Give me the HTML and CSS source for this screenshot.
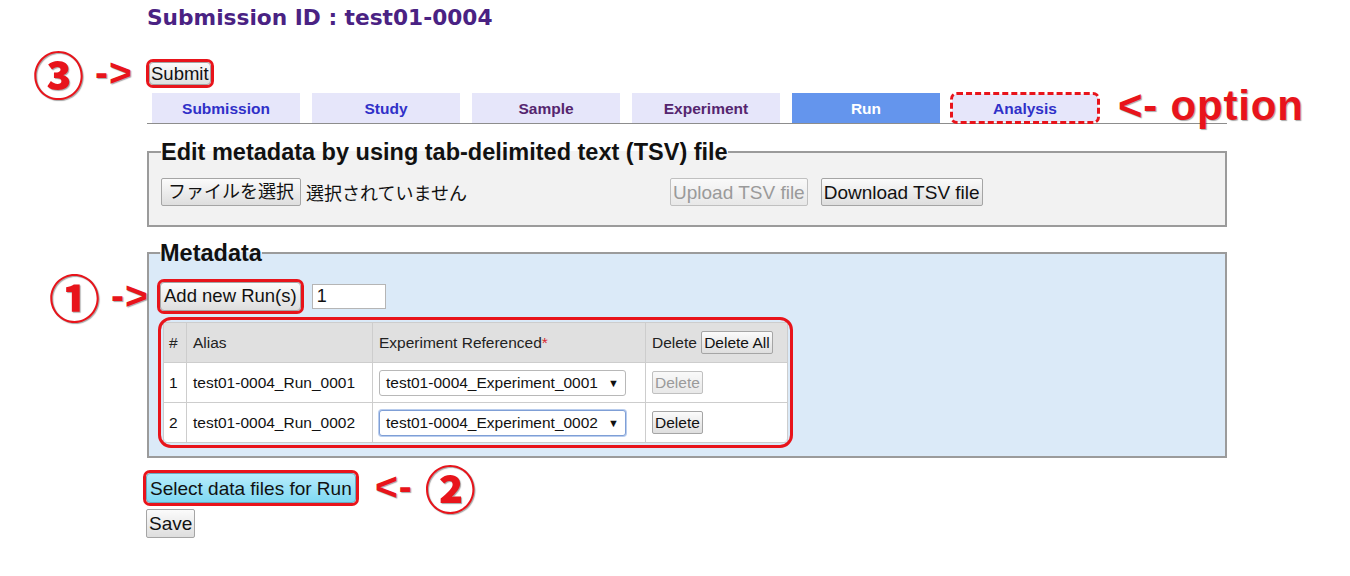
FILE: index.html
```html
<!DOCTYPE html>
<html lang="ja">
<head>
<meta charset="utf-8">
<title>Run</title>
<link rel="stylesheet" href="styles.css">
</head>
<body>
<div class="page">
  <h1 class="title">Submission ID : test01-0004</h1>

  <div class="submit-row">
    <span class="note note-3"><span class="circ">③</span><span class="arrow">-&gt;</span></span>
    <button class="btn btn-submit marked">Submit</button>
  </div>

  <div class="tabs">
    <a class="tab link">Submission</a>
    <a class="tab link">Study</a>
    <a class="tab visited">Sample</a>
    <a class="tab visited">Experiment</a>
    <a class="tab active">Run</a>
    <a class="tab link dashed">Analysis</a>
    <span class="note note-option">&lt;- option</span>
  </div>

  <fieldset class="fs fs-tsv">
    <legend>Edit metadata by using tab-delimited text (TSV) file</legend>
    <div class="tsv-row">
      <span class="file-input"><button class="btn btn-file">ファイルを選択</button><span class="file-name">選択されていません</span></span>
      <button class="btn" disabled>Upload TSV file</button>
      <button class="btn">Download TSV file</button>
    </div>
  </fieldset>

  <fieldset class="fs fs-meta">
    <legend>Metadata</legend>
    <div class="add-row">
      <span class="note note-1"><span class="circ">①</span><span class="arrow">-&gt;</span></span>
      <button class="btn btn-add marked">Add new Run(s)</button>
      <input class="num" type="text" value="1">
    </div>
    <table class="runs marked-box">
      <thead>
        <tr>
          <th class="c-no">#</th>
          <th class="c-alias">Alias</th>
          <th class="c-exp">Experiment Referenced<span class="req">*</span></th>
          <th class="c-del">Delete <button class="btn btn-sm">Delete All</button></th>
        </tr>
      </thead>
      <tbody>
        <tr>
          <td class="c-no">1</td>
          <td>test01-0004_Run_0001</td>
          <td><span class="select">test01-0004_Experiment_0001<span class="caret">▼</span></span></td>
          <td><button class="btn btn-sm" disabled>Delete</button></td>
        </tr>
        <tr>
          <td class="c-no">2</td>
          <td>test01-0004_Run_0002</td>
          <td><span class="select focused">test01-0004_Experiment_0002<span class="caret">▼</span></span></td>
          <td><button class="btn btn-sm">Delete</button></td>
        </tr>
      </tbody>
    </table>
  </fieldset>

  <div class="actions">
    <div class="select-row">
      <button class="btn btn-select marked">Select data files for Run</button>
      <span class="note note-2"><span class="arrow">&lt;-</span><span class="circ">②</span></span>
    </div>
    <div><button class="btn btn-save">Save</button></div>
  </div>
</div>
</body>
</html>
```

FILE: styles.css
```css
* { box-sizing: border-box; }
html, body { margin: 0; padding: 0; background: #fff; }
body {
  font-family: "Liberation Sans", Arial, "Noto Sans CJK JP", sans-serif;
  color: #111;
  width: 1350px;
  height: 576px;
  overflow: hidden;
}
.page {
  padding-left: 147px;
  width: 1227px;
}
.title {
  margin: 0;
  padding-top: 5px;
  font-family: "DejaVu Sans", sans-serif;
  font-weight: bold;
  font-size: 21.7px;
  line-height: 26px;
  color: #4a2283;
}

.btn {
  font-family: "Liberation Sans", Arial, "Noto Sans CJK JP", sans-serif;
  font-size: 19px;
  color: #111;
  background: linear-gradient(#fbfbfb, #dedede);
  border: 1px solid #a5a5a5;
  border-radius: 2px;
  padding: 0 2px;
  height: 25px;
  line-height: 22px;
  margin: 0;
}
.btn[disabled] { color: #9a9a9a; border-color: #c0c0c0; background: linear-gradient(#f9f9f9, #e8e8e8); }

.marked { outline: 3px solid #e8141b; outline-offset: 0; border-radius: 4px; }

.note {
  position: absolute;
  color: #e8141b;
  font-weight: bold;
  font-family: "Liberation Sans", Arial, sans-serif;
  text-shadow: 1px 1px 1px rgba(0,0,0,0.35);
  white-space: nowrap;
  display: flex;
  align-items: center;
}
.circ {
  font-family: "Noto Sans CJK JP", sans-serif;
  font-weight: 900;
  font-size: 51px;
  line-height: 50px;
}
.arrow { font-size: 39px; line-height: 36px; letter-spacing: 1px; }

.submit-row {
  position: relative;
  margin-top: 30px;
  height: 25px;
  display: flex;
  align-items: center;
}
.btn-submit { margin-left: 2px; height: 23px; line-height: 20px; padding: 0 1px; font-size: 18.5px; }
.note-3 { left: -114px; top: -13px; gap: 11px; }

.tabs {
  position: relative;
  display: flex;
  gap: 12px;
  margin-top: 7px;
  padding-left: 5px;
  height: 31px;
  border-bottom: 1px solid #8d8d8d;
  width: 1080px;
}
.tab {
  width: 148px;
  height: 30px;
  background: #e6e6fa;
  font-family: "Liberation Sans", Arial, sans-serif;
  font-weight: bold;
  font-size: 15.5px;
  display: flex;
  align-items: center;
  justify-content: center;
  padding-top: 1px;
}
.tab.link { color: #3030c8; }
.tab.visited { color: #55256f; }
.tab.active { background: #6495ed; color: #fff; }
.tab.dashed {
  outline: 3px dashed #e8141b;
  outline-offset: -1px;
  border-radius: 5px;
  height: 28px;
  margin-top: 1px;
  width: 146px;
  margin-left: 0;
}
.note-option {
  left: 971px;
  top: -11px;
  font-size: 42px;
  line-height: 48px;
  letter-spacing: 0.8px;
}

.fs {
  margin: 0;
  border: 2px solid #9b9b9b;
  padding: 0 12px;
}
.fs legend {
  padding: 0;
  font-weight: bold;
  font-size: 23.5px;
  line-height: 26px;
  color: #111;
}
.fs-tsv {
  margin-top: 15px;
  background: #f2f2f2;
  padding-top: 13px;
  padding-bottom: 19px;
}
.tsv-row { display: flex; align-items: center; }
.file-input { display: flex; align-items: center; width: 509px; }
.tsv-row .btn { height: 28px; line-height: 25px; }
.tsv-row .btn-file { padding: 0 6px; font-size: 18px; }
.file-name { font-size: 18px; margin-left: 5px; font-family: "Noto Sans CJK JP", sans-serif; }
.tsv-row .btn + .btn { margin-left: 13px; }

.fs-meta {
  margin-top: 13px;
  background: #dbeaf8;
  padding-top: 15px;
  padding-bottom: 13px;
  padding-left: 11px;
}
.add-row {
  position: relative;
  display: flex;
  align-items: center;
  gap: 11px;
  height: 30px;
}
.btn-add { height: 29px; line-height: 26px; padding: 0 3px; font-size: 18.5px; }
.num {
  width: 74px;
  height: 25px;
  border: 1px solid #b5b5b5;
  font-family: "Liberation Sans", Arial, sans-serif;
  font-size: 18px;
  padding: 0 4px;
  background: #fff;
  color: #111;
  margin: 0;
}
.note-1 { left: -111px; top: -10px; gap: 11px; }

.runs {
  margin-top: 11px;
  margin-left: 3px;
  border-collapse: collapse;
  font-size: 15.5px;
  background: #fff;
}
.marked-box { outline: 3px solid #e8141b; outline-offset: 2px; border-radius: 8px; }
.runs th, .runs td {
  border: 1px solid #cdcdcd;
  height: 40px;
  padding: 0 6px;
  text-align: left;
  white-space: nowrap;
}
.runs th { background: #e0e0e0; font-weight: normal; color: #222; }
.runs td { color: #111; }
.runs .c-no { width: 23px; padding: 0 5px; }
.runs .c-alias { width: 186px; }
.runs .c-exp { width: 273px; }
.runs .c-del { width: 142px; }
.req { color: #d9272e; }
.btn-sm {
  font-size: 15.5px;
  height: 23px;
  line-height: 20px;
  padding: 0 2px;
}
.select {
  display: inline-flex;
  align-items: center;
  height: 26px;
  width: 247px;
  border: 1px solid #b8b8b8;
  border-radius: 3px;
  padding: 0 6px;
  background: #fff;
  justify-content: space-between;
}
.select.focused { border-color: #7f9fd6; box-shadow: 0 0 0 1px #b9cdee; }
.caret { font-size: 11px; }

.actions { margin-top: 15px; margin-left: -1px; }
.select-row { position: relative; display: flex; align-items: center; height: 30px; }
.btn-select {
  height: 30px;
  line-height: 27px;
  background: linear-gradient(#b7ecfb, #7fd9f3);
  border-color: #6aa9c0;
  padding: 0 3px;
}
.note-2 { left: 229px; top: -11px; gap: 12px; }
.btn-save { margin-top: 6px; height: 29px; line-height: 26px; padding: 0 2px; }
```
